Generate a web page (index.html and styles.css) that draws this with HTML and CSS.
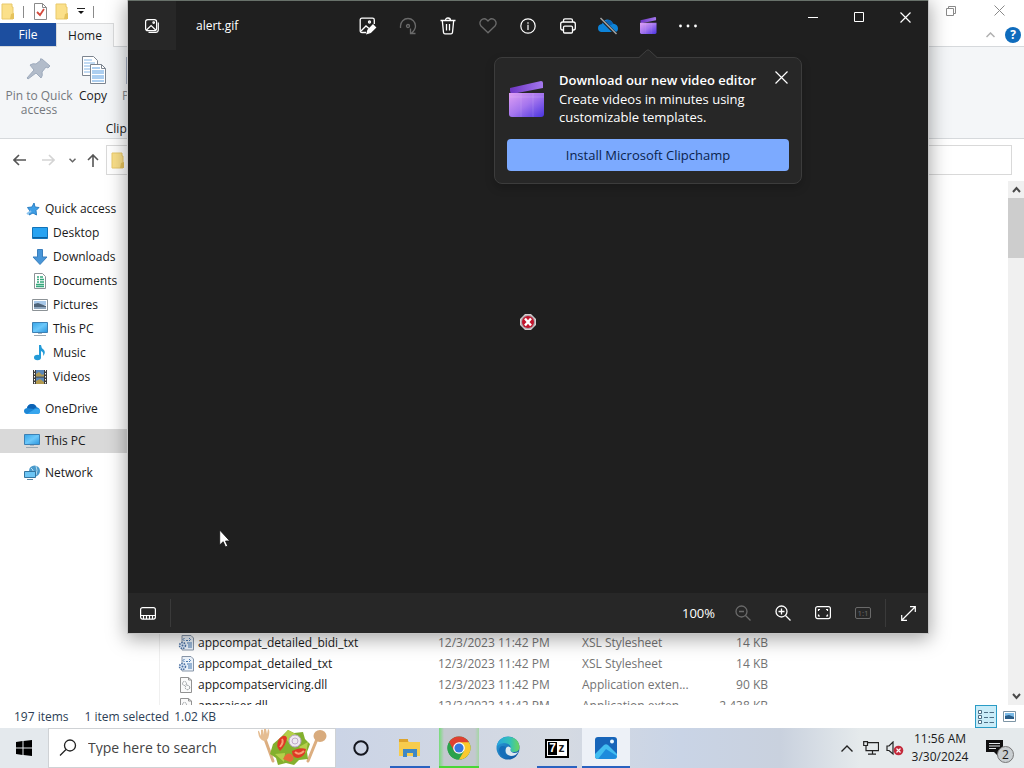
FILE: index.html
```html
<!DOCTYPE html>
<html lang="en">
<head>
<meta charset="utf-8">
<title>alert.gif</title>
<link rel="stylesheet" href="styles.css">
</head>
<body>
<svg class="defs" aria-hidden="true">
  <defs>
    <linearGradient id="clipA" x1="0" y1="0" x2="1" y2="1"><stop offset="0" stop-color="#e0a0f4"/><stop offset=".5" stop-color="#a475ee"/><stop offset="1" stop-color="#4934e0"/></linearGradient>
    <linearGradient id="clipB" x1="0" y1="0" x2="1" y2="0"><stop offset="0" stop-color="#6e35c4"/><stop offset="1" stop-color="#a478ee"/></linearGradient>
    <linearGradient id="scr" x1="0" y1="0" x2="1" y2="1"><stop offset="0" stop-color="#35a5e8"/><stop offset=".5" stop-color="#6cc8fa"/><stop offset="1" stop-color="#2a95dd"/></linearGradient>
    <linearGradient id="edgeA" x1="0" y1="0" x2="1" y2="1"><stop offset="0" stop-color="#2aa3dd"/><stop offset="1" stop-color="#0f4f9c"/></linearGradient>
    <linearGradient id="edgeB" x1="0" y1="0" x2="1" y2="0"><stop offset="0" stop-color="#27a5e0"/><stop offset=".6" stop-color="#35c2b4"/><stop offset="1" stop-color="#6dd65a"/></linearGradient>
    <symbol id="folder" viewBox="0 0 14 17"><path d="M1 1h10v3h1v12H1z" fill="#fbe08a" stroke="#e9c96b"/><path d="M10 11l3-1v6h-4z" fill="#e5c25c"/></symbol>
    <symbol id="pc" viewBox="0 0 16 16"><path d="M.5 1.500h15v10H.5z" fill="url(#scr)" stroke="#3c80b4"/><path d="M6 12h4v1H6z" fill="#a9b7c2"/><path d="M2 14.500h12" stroke="#9aa8b2"/></symbol>
    <symbol id="clip" viewBox="0 0 36 36"><path d="M1 7l31-7q2 0 2 2v5L3 13Q1 12 1 10z" fill="url(#clipB)"/><path d="M0 12h35v21q0 3-3 3H3q-3 0-3-3z" fill="url(#clipA)"/><path d="M1 16h34M12 12v24M24 12v24" stroke="#fff" stroke-opacity=".13"/></symbol>
    <symbol id="xsl" viewBox="0 0 16 16"><path d="M4 .5h9l2.500 2.500v12H4z" fill="#eaf1f9" stroke="#8795a8"/><path d="M6.500 3L5 4.500 6.500 6M11 3l1.500 1.500L11 6M8 5.500h2M9 8h5M10 10h4M10 12h4" fill="none" stroke="#4778b0"/><circle cx="4.500" cy="10.500" r="3" fill="#dce8f6" stroke="#4b70a2" stroke-width="1.500" stroke-dasharray="1.500 1"/><circle cx="4.500" cy="10.500" r="1" fill="#4b70a2"/></symbol>
    <symbol id="dll" viewBox="0 0 16 16"><path d="M2.500.5h8L13.500 3v12.500h-11z" fill="#fafafa" stroke="#929292"/><path d="M10.500.5V3h3" fill="none" stroke="#929292"/><circle cx="6.500" cy="6.500" r="2" fill="none" stroke="#8a8f93" stroke-dasharray="1.500 .7"/><circle cx="9.500" cy="10.500" r="2.200" fill="none" stroke="#8a8f93" stroke-dasharray="1.500 .7"/></symbol>
  </defs>
</svg>

<div class="desktop">
  <section class="explorer" aria-label="File Explorer">
    <header class="ex-title">
      <div class="quick-tools">
        <svg width="14" height="17"><use href="#folder"/></svg>
        <i class="tick"></i>
        <svg width="13" height="17" viewBox="0 0 13 17"><path d="M.5.5h8l4 4v12H.5z" fill="#fff" stroke="#8a8a8a"/><path d="M8.500.5v4h4" fill="none" stroke="#8a8a8a"/><path d="M3 9l3 3 4-6" fill="none" stroke="#d4493c" stroke-width="1.800"/></svg>
        <svg width="14" height="17"><use href="#folder"/></svg>
        <svg width="8" height="7" viewBox="0 0 8 7"><path d="M0 .5h8" stroke="#222"/><path d="M1 3h6L4 6z" fill="#111"/></svg>
        <i class="tick"></i>
      </div>
      <div class="ex-controls">
        <button aria-label="Restore"><svg width="10" height="10" viewBox="0 0 10 10" fill="none" stroke="#8a8a8a"><path d="M.5 2.500h7v7h-7zM2.500 2.500v-2h7v7h-2"/></svg></button>
        <button aria-label="Close"><svg width="11" height="11" viewBox="0 0 11 11" stroke="#8a8a8a"><path d="M.5.5l10 10M10.500.5l-10 10"/></svg></button>
      </div>
    </header>
    <nav class="ex-tabs">
      <button class="tab-file">File</button>
      <button class="tab-home">Home</button>
      <div class="tabs-end">
        <button aria-label="Collapse ribbon"><svg width="9" height="6" viewBox="0 0 9 6" fill="none" stroke="#b0b0b0" stroke-width="1.500"><path d="M.5 5l4-4 4 4"/></svg></button>
        <button class="help" aria-label="Help">?</button>
      </div>
    </nav>
    <div class="ribbon">
      <div class="ribbon-group">
        <div class="ribbon-row">
          <button class="rb rb-pin"><svg width="32" height="32" viewBox="0 0 32 32" fill="#b2bcca"><path d="M19 5l8 7-2 2-2-1-4 5q1 4-1 6l-5-5-8 6-1-1 7-8-4-5q3-2 6-1l5-4-1-1z" stroke="#9eabbd"/></svg><span>Pin to Quick<br>access</span></button>
          <button class="rb rb-copy"><svg width="32" height="32" viewBox="0 0 32 32" fill="#fff" stroke="#7c8590"><path d="M5.500 2.500h11l4 4v15h-15z"/><path d="M7 6h8M7 9h11M7 12h11M7 15h11M7 18h11" stroke="#85b6e6"/><path d="M13.500 10.500h11l4 4v15h-15z"/><path d="M24.500 10.500v4h4" fill="none"/><path d="M15 14h8M15 17h12M15 19h12M15 22h12M15 24h12M15 27h12" stroke="#5b9ee0"/></svg><span>Copy</span></button>
          <button class="rb rb-paste"><svg width="28" height="32" viewBox="0 0 28 32"><path d="M4 3h22v27H4z" fill="#a7b0c2"/></svg><span>Paste</span></button>
        </div>
        <div class="ribbon-name">Clipboard</div>
      </div>
    </div>
    <div class="address-row">
      <button aria-label="Back"><svg width="13" height="12" viewBox="0 0 13 12" fill="none" stroke="#555" stroke-width="1.600"><path d="M13 6H1M6 1L1 6l5 5"/></svg></button>
      <button aria-label="Forward"><svg width="13" height="12" viewBox="0 0 13 12" fill="none" stroke="#d4d4d4" stroke-width="1.600"><path d="M0 6h12M7 1l5 5-5 5"/></svg></button>
      <button class="recent" aria-label="Recent locations"><svg width="7" height="5" viewBox="0 0 7 5" fill="none" stroke="#666" stroke-width="1.500"><path d="M.5 .7l3 3 3-3"/></svg></button>
      <button class="up" aria-label="Up"><svg width="12" height="13" viewBox="0 0 12 13" fill="none" stroke="#555" stroke-width="1.600"><path d="M6 13V1M1 6l5-5 5 5"/></svg></button>
      <label class="address"><svg width="14" height="17"><use href="#folder"/></svg><input type="text" aria-label="Address"></label>
    </div>
    <div class="ex-body">
      <nav class="side">
        <a href="#" class="root"><svg width="16" height="16" viewBox="0 0 16 16"><path d="M10 2l1 4 4 .5-3 3 .5 4.500-3.500-2-4 2 1-4-2.500-3.500 4.500-.5z" fill="#3f9fe6" stroke="#2b7fc4"/><path d="M3 13l4-3" stroke="#8bc4ef" stroke-width="2"/></svg>Quick access</a>
        <a href="#"><svg width="16" height="16" viewBox="0 0 16 16"><path d="M.5 2.500h15v11H.5z" fill="#27a3f2" stroke="#1273b8"/><path d="M1 12.500h14" stroke="#0c5f9e"/></svg>Desktop</a>
        <a href="#"><svg width="16" height="16" viewBox="0 0 16 16"><path d="M5.500.5h5V8H15l-7 7.500L1 8h4.500z" fill="#4896d8" stroke="#3a7fbd"/></svg>Downloads</a>
        <a href="#"><svg width="16" height="16" viewBox="0 0 16 16"><path d="M2.500.5h8l3 3v12h-11z" fill="#fff" stroke="#8c9296"/><path d="M8 4h3M5 4h2M5 6.500h2M8 6.500h4M5 9h2M8 9h4M4 11.500h8M4 13.500h8" stroke="#35a87c" stroke-width="1.300"/></svg>Documents</a>
        <a href="#"><svg width="16" height="16" viewBox="0 0 16 16"><path d="M.5 2.500h15v11H.5z" fill="#fff" stroke="#8c9296"/><path d="M2 4h12v4H2z" fill="#a8c8e8"/><path d="M2 7l4-1 8 3v3H2z" fill="#4f6479"/><path d="M2 10h12v2H2z" fill="#8fa6bd"/></svg>Pictures</a>
        <a href="#"><svg width="16" height="16"><use href="#pc"/></svg>This PC</a>
        <a href="#"><svg width="16" height="16" viewBox="0 0 16 16" fill="#239bd8"><ellipse cx="5.500" cy="12.500" rx="3.500" ry="2.800"/><path d="M7 0h2q0 3 3 5 2 3-1 6 1-4-2-5v7H7z"/></svg>Music</a>
        <a href="#"><svg width="16" height="16" viewBox="0 0 16 16"><path d="M1 1h14v14H1z" fill="#3b3b3b"/><path d="M4 1h8v6.500H4zM4 8.500h8V15H4z" fill="#5c87b8"/><path d="M4 5l3-2 3 3 2-1v2.500H4zM4 12l4-2 4 3v2H4z" fill="#b29a50"/><path d="M2.500 1v14M13.500 1v14" stroke="#fff" stroke-dasharray="1.500 1.500"/></svg>Videos</a>
        <a href="#" class="root gap"><svg width="16" height="16" viewBox="0 0 16 16"><path d="M3 13q-3-.5-3-3t3-3q1-4 5-4 3 0 4.500 3Q16 7 16 10t-3 3z" fill="#1d87d6"/><path d="M3 13l8-5q5-1 5 2.500 0 2.500-3 2.500z" fill="#37a6ee"/><path d="M3 7q1-4 5-4 3 0 4.500 3l-3 2z" fill="#0d62b4"/></svg>OneDrive</a>
        <a href="#" class="root gap current"><svg width="16" height="16"><use href="#pc"/></svg>This PC</a>
        <a href="#" class="root gap"><svg width="16" height="16" viewBox="0 0 16 16"><circle cx="10.500" cy="6" r="5.500" fill="#4a9acb"/><path d="M7 3q3 2 2 4M12 1q2 4 0 9" stroke="#b5ddf2" fill="none"/><path d="M.5 6.500h11v6H.5z" fill="#6cc5f4" stroke="#34759f"/><path d="M3 14.500h6" stroke="#5a87a5"/></svg>Network</a>
      </nav>
      <main class="files">
        <table>
          <colgroup><col class="c-name"><col class="c-date"><col class="c-type"><col class="c-size"></colgroup>
          <tbody>
            <tr><td><span class="name"><svg width="16" height="16"><use href="#xsl"/></svg>appcompat_detailed_bidi_txt</span></td><td>12/3/2023 11:42 PM</td><td>XSL Stylesheet</td><td class="num">14 KB</td></tr>
            <tr><td><span class="name"><svg width="16" height="16"><use href="#xsl"/></svg>appcompat_detailed_txt</span></td><td>12/3/2023 11:42 PM</td><td>XSL Stylesheet</td><td class="num">14 KB</td></tr>
            <tr><td><span class="name"><svg width="16" height="16"><use href="#dll"/></svg>appcompatservicing.dll</span></td><td>12/3/2023 11:42 PM</td><td>Application exten...</td><td class="num">90 KB</td></tr>
            <tr><td><span class="name"><svg width="16" height="16"><use href="#dll"/></svg>appraiser.dll</span></td><td>12/3/2023 11:42 PM</td><td>Application exten...</td><td class="num">2,438 KB</td></tr>
          </tbody>
        </table>
      </main>
      <div class="scroll">
        <button aria-label="Scroll up"><svg width="9" height="7" viewBox="0 0 9 7" fill="none" stroke="#4a4a4a" stroke-width="2"><path d="M1 6l3.500-4L8 6"/></svg></button>
        <div class="thumb"></div>
        <button aria-label="Scroll down"><svg width="9" height="7" viewBox="0 0 9 7" fill="none" stroke="#4a4a4a" stroke-width="2"><path d="M1 1l3.500 4L8 1"/></svg></button>
      </div>
    </div>
    <footer class="status">
      <span>197 items</span><span class="sel">1 item selected</span><span>1.02 KB</span>
      <div class="views">
        <button class="on" aria-label="Details view"><svg width="16" height="14" viewBox="0 0 16 14" fill="none" stroke="#4d6f86"><path d="M.5.500h3v3h-3zM.5 5.500h3v3h-3zM.5 10.500h3v3h-3z" fill="#fff"/><path d="M6 2.500h4M11.500 2.500H16M6 7.500h4M11.500 7.500H16M6 12.500h4M11.500 12.500H16"/></svg></button>
        <button aria-label="Large icons view"><svg width="13" height="11" viewBox="0 0 13 11"><path d="M.5.5h12v10H.5z" fill="#fff" stroke="#7d95a5"/><path d="M2 2h9v6H2z" fill="#7cbbe8"/><path d="M2 5l4-1 5 2v2H2z" fill="#2a5d88"/></svg></button>
      </div>
    </footer>
  </section>

  <section class="photos" aria-label="Photos">
    <header class="ph-head">
      <div class="ph-left">
        <button class="gallery" aria-label="Gallery"><svg width="14" height="14" viewBox="0 0 14 14" fill="none" stroke="#fff" stroke-width="1.200"><rect x=".6" y=".6" width="11" height="11" rx="2.200"/><path d="M1.500 11l4.600-4.500 4.600 4.500M13.300 3.500v7.300q0 2.500-2.500 2.500H3.500"/><circle cx="8.700" cy="3.600" r=".8"/></svg></button>
        <span class="fname">alert.gif</span>
      </div>
      <div class="tools">
        <button aria-label="Edit image"><svg width="18" height="18" viewBox="0 0 18 18" fill="none" stroke="#fff" stroke-width="1.300"><path d="M7 15.500H3q-1.800 0-1.800-1.800V3Q1.200 1.200 3 1.200h10.500q1.800 0 1.800 1.800v4"/><path d="M2 14l5-5 3 2.500"/><circle cx="10.500" cy="5" r="1"/><path d="M8 16.500l1-3.500 5-5 2.500 2.500-5 5z" fill="#fff"/></svg></button>
        <button class="dim" aria-label="Rotate"><svg width="18" height="18" viewBox="0 0 18 18" fill="none" stroke="currentColor" stroke-width="1.300"><path d="M1.500 11V9a7.500 7.500 0 0 1 15 0q0 4-4.500 7.500M11.500 11.500v5h5"/><circle cx="9" cy="9" r="1.500"/></svg></button>
        <button aria-label="Delete"><svg width="16" height="18" viewBox="0 0 16 18" fill="none" stroke="#fff" stroke-width="1.300"><path d="M.5 3.500h15M2.300 3.500l1.200 11.800q.2 1.500 1.500 1.500h6q1.300 0 1.500-1.500l1.200-11.800M5.500 3.500q0-2.500 2.500-2.500t2.500 2.500M6.500 7v6.500M9.500 7v6.500"/></svg></button>
        <button class="dim" aria-label="Favorite"><svg width="18" height="16" viewBox="0 0 18 16" fill="none" stroke="currentColor" stroke-width="1.300"><path d="M9 14.800L2 8Q-.2 5 2 2.300 5-.6 8 2l1 1 1-1q3-2.600 6 .3 2.200 2.700 0 5.700z"/></svg></button>
        <button aria-label="File info"><svg width="16" height="16" viewBox="0 0 16 16" fill="none" stroke="#fff" stroke-width="1.200"><circle cx="8" cy="8" r="7.200"/><path d="M8 6.800V12M8 4.200v1.500"/></svg></button>
        <button aria-label="Print"><svg width="16" height="16" viewBox="0 0 16 16" fill="none" stroke="#fff" stroke-width="1.300"><path d="M3.500 12H2.500Q.7 12 .7 10V6Q.7 4 2.700 4h10.600q2 0 2 2v4q0 2-1.800 2h-1M3.500 4V2.500Q3.500.8 5 .8h6q1.500 0 1.500 1.700V4"/><rect x="3.500" y="8.200" width="9" height="6.800" rx="1.200"/></svg></button>
        <button aria-label="OneDrive"><svg width="22" height="18" viewBox="0 0 22 18"><path d="M4 15q-3-.5-3-4t4-4q1-4 5-4.500 4 0 6 4 5 1 5 5t-4 3.500z" fill="#0d83d8"/><path d="M7 7q2-4.500 5-4 3 .5 4 4l-6 3z" fill="#0a62b2"/><path d="M3 1l16 16" stroke="#1f1f1f" stroke-width="3"/><path d="M3.500 1l16 16" stroke="#a6a6a6" stroke-width="1.400"/></svg></button>
        <div class="clip-anchor">
          <button aria-label="Clipchamp"><svg width="17" height="17"><use href="#clip"/></svg></button>
          <div class="popup" role="dialog" aria-label="Download our new video editor">
            <svg class="notch" width="18" height="9" viewBox="0 0 18 9"><path d="M0 9l7.500-7.500q1.500-1.300 3 0L18 9z" fill="#272727"/><path d="M0 8.500L7.500 1.500q1.500-1.300 3 0L18 8.500" fill="none" stroke="#414141"/></svg>
            <div class="pop-main">
              <svg width="36" height="36"><use href="#clip"/></svg>
              <div class="pop-text"><strong>Download our new video editor</strong><p>Create videos in minutes using<br>customizable templates.</p></div>
              <button class="pop-close" aria-label="Close"><svg width="13" height="13" viewBox="0 0 13 13" stroke="#fff" stroke-width="1.200"><path d="M.5.5l12 12M12.500.5l-12 12"/></svg></button>
            </div>
            <button class="install">Install Microsoft Clipchamp</button>
          </div>
        </div>
        <button aria-label="See more"><svg width="18" height="4" viewBox="0 0 18 4" fill="#fff"><circle cx="1.500" cy="2" r="1.400"/><circle cx="9" cy="2" r="1.400"/><circle cx="16.500" cy="2" r="1.400"/></svg></button>
      </div>
      <div class="ph-controls">
        <button aria-label="Minimize"><svg width="10" height="10" viewBox="0 0 10 10" stroke="#fff"><path d="M0 5.500h10"/></svg></button>
        <button aria-label="Maximize"><svg width="10" height="10" viewBox="0 0 10 10" stroke="#fff" fill="none"><path d="M.5.5h9v9h-9z"/></svg></button>
        <button aria-label="Close"><svg width="11" height="11" viewBox="0 0 11 11" stroke="#fff" stroke-width="1.200"><path d="M.5.5l10 10M10.500.5l-10 10"/></svg></button>
      </div>
    </header>
    <div class="canvas">
      <svg width="16" height="16" viewBox="0 0 16 16"><path d="M5 0h6l5 5v6l-5 5H5l-5-5V5z" fill="#d6cdd0"/><circle cx="8" cy="8" r="7" fill="#a79da2"/><circle cx="8" cy="8" r="6" fill="#c2142c"/><path d="M5 4.500l6 7M11 4.500l-6 7" stroke="#fff" stroke-width="2.400"/></svg>
    </div>
    <footer class="ph-foot">
      <button aria-label="Filmstrip"><svg width="16" height="13" viewBox="0 0 16 13" fill="none" stroke="#fff" stroke-width="1.200"><rect x=".6" y=".6" width="14.800" height="11.500" rx="2"/><path d="M1 8.500h14M3.500 9v3M6.500 9v3M9.500 9v3M12.500 9v3"/></svg></button>
      <i class="bar"></i>
      <span class="zoom">100%</span>
      <button class="dim" aria-label="Zoom out"><svg width="16" height="16" viewBox="0 0 16 16" fill="none" stroke="currentColor" stroke-width="1.300"><circle cx="6.500" cy="6.500" r="5.500"/><path d="M10.500 10.500l5 5M4 6.500h5"/></svg></button>
      <button aria-label="Zoom in"><svg width="16" height="16" viewBox="0 0 16 16" fill="none" stroke="#fff" stroke-width="1.300"><circle cx="6.500" cy="6.500" r="5.500"/><path d="M10.500 10.500l5 5M3.500 6.500h6M6.500 3.500v6"/></svg></button>
      <button aria-label="Zoom to fit"><svg width="16" height="14" viewBox="0 0 16 14" fill="none" stroke="#fff" stroke-width="1.200"><rect x=".6" y=".6" width="14.800" height="12" rx="2"/><path d="M3.500 5V3.500H5M11 3.500h1.500V5M12.500 8.500V10H11M5 10H3.500V8.500"/></svg></button>
      <button class="dim actual" aria-label="Zoom to actual size">1:1</button>
      <i class="bar"></i>
      <button aria-label="Full screen"><svg width="15" height="15" viewBox="0 0 15 15" fill="none" stroke="#fff" stroke-width="1.200"><path d="M1 14L14 1M9 .7h5.300V6M.7 9v5.300H6"/></svg></button>
    </footer>
  </section>

  <svg class="cursor" width="12" height="19" viewBox="0 0 12 19"><path d="M.7 1v15l3.500-3.300 2.300 5.300 2.200-1-2.200-5h4.300z" fill="#fff" stroke="#111" stroke-width=".8"/></svg>

  <footer class="taskbar">
    <button class="start" aria-label="Start"><svg width="16" height="16" viewBox="0 0 16 16" fill="#000"><path d="M0 2l6.500-1v6.500H0zM7.500.9L16 0v7.500H7.500zM0 8.500h6.500V15L0 14zM7.500 8.500H16V16l-8.500-1z"/></svg></button>
    <label class="search">
      <svg width="18" height="18" viewBox="0 0 18 18" fill="none" stroke="#222" stroke-width="1.300"><circle cx="11" cy="6.500" r="5.500"/><path d="M7 10.500L1 16.500"/></svg>
      <input type="text" placeholder="Type here to search" aria-label="Search">
      <svg width="72" height="38" viewBox="0 0 72 38"><g stroke="#dcae80" stroke-width="3" stroke-linecap="round"><path d="M8 10l8 22M60 10l-9 22"/></g><path d="M1 3q0-2 1-1l2 5 0-6q1-1 2 0l1 5 0-6q1-1 2 0l1 5 1-5q2 0 1 6-1 6-5 6-5-1-6-9z" fill="#e5bd92"/><ellipse cx="63" cy="7" rx="6.500" ry="6" fill="#d8ab7d"/><path d="M16 15l7-6 8-8 6 3 9-1 2 7 5 5-3 8 1 7-9 1-5 5-8-2-8 2-2-7-6-4z" fill="#83b02d"/><path d="M26 7l5-6 6 3 4 4-8 7zM42 18l9-5-2 11zM18 25l10-1-1 9z" fill="#b4cf4a"/><path d="M22 10q6-6 8-1-1 7-7 13-5-5-1-12zM35 22q8-4 14-2-1 8-8 9-6 0-6-7z" fill="#df3925"/><path d="M25 10q2 3-2 8M38 23q4 4 9-1" stroke="#f8a076" fill="none" stroke-width="2"/><circle cx="38" cy="12" r="6" fill="#eee9ef" stroke="#b9a4c8"/><circle cx="38" cy="12" r="3" fill="none" stroke="#c0abc9"/><path d="M26 30q5-9 10-3 2 4-3 6z" fill="#e66a38"/></svg>
    </label>
    <div class="apps">
      <button aria-label="Cortana"><svg width="16" height="16" viewBox="0 0 16 16"><circle cx="8" cy="8" r="6.700" fill="none" stroke="#14161e" stroke-width="2"/></svg></button>
      <button class="run" aria-label="File Explorer"><svg width="22" height="20" viewBox="0 0 22 20"><path d="M0 1h8l2 3h11v14H0z" fill="#f7cc4d"/><path d="M0 1h9v3H0z" fill="#dda42c"/><path d="M4 11h14v8h-4v-4H8v4H4z" fill="#3f88c5"/></svg></button>
      <button class="run chrome" aria-label="Chrome"><svg width="24" height="24" viewBox="0 0 24 24"><circle cx="12" cy="12" r="11.500" fill="#2ba24c"/><path d="M2 6.250A11.500 11.500 0 0 1 22 6.250L12 12z" fill="#df4030"/><path d="M2 6.250L8 17l4-5V6.250z" fill="#df4030"/><path d="M22 6.250A11.500 11.500 0 0 1 12 23.500L17 15l-5-8.700z" fill="#fac92d"/><path d="M2 6.250L7 15l5 8.500A11.500 11.500 0 0 1 2 6.250z" fill="#2ba24c"/><circle cx="12" cy="12" r="5.800" fill="#fff"/><circle cx="12" cy="12" r="4.600" fill="#3777df"/></svg></button>
      <button aria-label="Edge"><svg width="24" height="24" viewBox="0 0 24 24"><circle cx="12" cy="12" r="11.500" fill="url(#edgeA)"/><path d="M1 10C3-3 23-2 23.500 11q0 5-5.500 5-5 0-3-4-1-5-7-5-4 0-7 3z" fill="url(#edgeB)"/><path d="M15 12q-2 4 3 5 3 0 4.500-1.500Q20 20 15 20q-7-1-5-8 2-3 5 0z" fill="#dce8f0"/><path d="M10 11q-4 9 5 11-11 1-12-8 1-6 7-3z" fill="#156eb9"/></svg></button>
      <button class="run" aria-label="7-Zip"><span class="zip"><b>7</b><b>z</b></span></button>
      <button class="run active" aria-label="Photos"><svg width="22" height="22" viewBox="0 0 22 22"><rect width="22" height="22" rx="3" fill="#1765b9"/><path d="M0 17L9 8q2-1.500 4 0l9 9v2q0 3-3 3H3q-3 0-3-3z" fill="#42bdf0"/><path d="M11 12l11 7q-1 3-4 3H3z" fill="#1e8bdc"/><circle cx="17" cy="4.500" r="2" fill="#e9f7ff"/></svg></button>
    </div>
    <div class="tray">
      <button aria-label="Show hidden icons"><svg width="12" height="7" viewBox="0 0 12 7" fill="none" stroke="#222" stroke-width="1.400"><path d="M.5 6.500L6 1l5.500 5.500"/></svg></button>
      <button aria-label="Network"><svg width="16" height="14" viewBox="0 0 16 14" fill="none" stroke="#222" stroke-width="1.200"><path d="M4.500 1.600h11v8H3V5M9.500 9.600v3.500M5 13.100h8"/><path d="M.7.700h3.800v3.800H.7z"/></svg></button>
      <button aria-label="Volume muted"><svg width="18" height="15" viewBox="0 0 18 15"><path d="M1 5h2l4-4v12L3 9.500H1z" fill="none" stroke="#222" stroke-width="1.200"/><circle cx="12.500" cy="9.500" r="4.800" fill="#c42b3c"/><path d="M10.500 7.500l4 4M14.500 7.500l-4 4" stroke="#fff" stroke-width="1.200"/></svg></button>
      <button class="clock">11:56 AM<br>3/30/2024</button>
      <button class="notif" aria-label="Notifications"><svg width="17" height="16" viewBox="0 0 17 16"><path d="M0 0h17v12h-5v4l-4-4H0z" fill="#101010"/><path d="M3 3.500h11M3 6h11M3 8.500h7" stroke="#e4e8ea"/></svg><span class="badge">2</span></button>
    </div>
  </footer>
</div>
</body>
</html>
```
FILE: styles.css
```css
* { box-sizing: border-box; }
body { margin: 0; font: 12px/16px "Open Sans", "Noto Sans", sans-serif; color: #1a1a1a; }
button { border: 0; padding: 0; margin: 0; background: none; font: inherit; color: inherit; display: flex; align-items: center; justify-content: center; }
input { border: 0; outline: 0; padding: 0; background: none; font: inherit; color: inherit; min-width: 0; flex: 1; }
a { color: inherit; text-decoration: none; }
svg { display: block; flex: none; }
.defs { position: absolute; width: 0; height: 0; }
.desktop { position: relative; height: 100vh; display: flex; flex-direction: column; overflow: hidden; }

/* File Explorer */
.explorer { flex: 1; min-height: 0; display: flex; flex-direction: column; background: #fff; }
.ex-title { display: flex; justify-content: space-between; height: 23px; }
.quick-tools { display: flex; align-items: center; gap: 8px; padding-left: 1px; }
.quick-tools .tick { width: 1px; height: 12px; background: #8a8a8a; }
.quick-tools .tick + svg { margin-left: 2px; }
.ex-controls { display: flex; }
.ex-controls button { width: 46px; height: 21px; }
.ex-controls button:last-child { width: 50px; }
.ex-tabs { display: flex; height: 24px; border-bottom: 1px solid #d6d9dc; }
.tab-file { width: 56px; background: #1c4e9f; color: #fff; }
.tab-home { width: 58px; background: #f5f6f7; border: 1px solid #dadbdc; border-bottom: 0; margin-bottom: -1px; }
.tabs-end { margin-left: auto; display: flex; align-items: center; gap: 10px; padding-right: 3px; }
.help { width: 16px; height: 16px; border-radius: 50%; background: #0f6cbd; color: #fff; font-weight: 700; }
.ribbon { height: 92px; display: flex; background: #f4f6f8; border-bottom: 1px solid #d6d9dc; }
.ribbon-group { display: flex; flex-direction: column; width: 266px; padding-top: 7px; }
.ribbon-row { display: flex; flex: 1; align-items: flex-start; }
.rb { flex-direction: column; gap: 3px; line-height: 14px; }
.rb-pin { width: 78px; color: #75797e; }
.rb-copy { width: 30px; }
.rb-paste { margin-left: 14px; color: #85898e; align-items: flex-start; }
.ribbon-name { text-align: center; padding-bottom: 1px; }
.address-row { display: flex; align-items: center; height: 42px; padding: 0 12px; }
.address-row button { width: 14px; height: 24px; }
.address-row button + button { margin-left: 15px; }
.address-row button.recent { width: 10px; margin-left: 12px; }
.address-row button.up { margin-left: 9px; }
.address { flex: 1; height: 30px; display: flex; align-items: center; gap: 8px; margin-left: 6px; padding-left: 4px; border: 1px solid #d9d9d9; }
.ex-body { flex: 1; min-height: 0; display: flex; }
.side { width: 160px; padding-top: 16px; border-right: 1px solid #f0f0f0; }
.side a { display: flex; align-items: center; gap: 5px; height: 24px; padding-left: 32px; }
.side a.root { padding-left: 24px; }
.side a.gap { margin-top: 8px; }
.side a.current { background: #d9d9d9; }
.files { flex: 1; min-width: 0; overflow: hidden; display: flex; flex-direction: column; justify-content: flex-end; align-items: flex-start; }
.files table { border-collapse: collapse; table-layout: fixed; width: 590px; margin: 0 0 -11px 18px; color: #737373; }
.files td { height: 21px; padding: 0; white-space: nowrap; }
.c-name { width: 260px; }
.c-date { width: 144px; }
.c-type { width: 126px; }
.name { display: flex; align-items: center; gap: 4px; color: #1a1a1a; }
.files td.num { text-align: right; }
.scroll { width: 16px; background: #f0f0f0; display: flex; flex-direction: column; }
.scroll button { height: 17px; }
.scroll .thumb { height: 60px; background: #cdcdcd; margin-bottom: auto; }
.status { display: flex; align-items: center; height: 23px; padding-left: 14px; color: #2c3e55; }
.status .sel { margin: 0 5px 0 16px; }
.views { margin-left: auto; display: flex; padding-right: 3px; }
.views button { width: 24px; height: 23px; }
.views .on { width: 22px; background: #c9ecf8; border: 1px solid #2a9cc6; }

/* Photos */
.photos { position: absolute; inset: 0 96px 135px 128px; display: flex; flex-direction: column; background: #1f1f1f; color: #fff; border-top: 1px solid #68716a; box-shadow: 0 0 0 1px #c4c4c4, 0 4px 18px 2px rgba(0, 0, 0, .35); }
.ph-head { display: grid; grid-template-columns: 1fr auto 1fr; height: 49px; }
.ph-left { display: flex; align-items: center; gap: 20px; }
.gallery { width: 48px; height: 49px; background: #272727; }
.tools { display: flex; align-items: center; }
.tools button { width: 40px; height: 40px; }
.dim { color: #6a6a6a; }
.ph-controls { display: flex; justify-content: flex-end; }
.ph-controls button { width: 46px; height: 32px; }
.clip-anchor { position: relative; }
.popup { position: absolute; top: 51px; left: 50%; transform: translateX(-50%); width: 308px; padding: 12px; background: #272727; border: 1px solid #3c3c3c; border-radius: 8px; box-shadow: 0 4px 10px rgba(0, 0, 0, .2); }
.notch { position: absolute; top: -9px; left: 144px; }
.pop-main { display: flex; align-items: flex-start; gap: 14px; padding-left: 2px; height: 69px; }
.pop-main > svg { margin-top: 11px; }
.pop-text { flex: 1; font-size: 13px; line-height: 18px; white-space: nowrap; }
.pop-text strong { display: block; font-weight: 600; line-height: 20px; }
.pop-text p { margin: 0; }
.popup .pop-close { width: 16px; height: 16px; }
.popup .install { width: 100%; height: 32px; border-radius: 4px; background: #7caaff; color: #0a1f4d; font-size: 13px; }
.canvas { flex: 1; display: flex; align-items: center; justify-content: center; }
.ph-foot { display: flex; align-items: center; height: 40px; background: #272727; }
.ph-foot button { width: 40px; height: 40px; }
.ph-foot .bar { width: 1px; height: 28px; background: #3a3a3a; margin: 0 2px; }
.zoom { margin-left: auto; margin-right: 8px; font-size: 13px; }
.ph-foot .actual { width: 16px; height: 12px; margin: 0 12px; border: 1px solid #6a6a6a; border-radius: 2px; font-size: 8px; line-height: 8px; }
.cursor { position: absolute; left: 219px; top: 529px; }

/* Taskbar */
.taskbar { display: flex; height: 40px; background: linear-gradient(90deg, #e4e9ed 0, #e4e9ed 48px, #cbd4e6 336px, #d5dae2 560px, #c9d4e6 680px, #c9d1de 780px, #e5eaec 860px); }
.start { width: 48px; }
.search { width: 288px; display: flex; align-items: center; background: #fff; border: 1px solid #cfd2d5; padding: 0 6px 0 10px; color: #444; font-size: 14px; }
.search input { margin-left: 11px; }
.search input::placeholder { color: #444; opacity: 1; }
.apps { display: flex; gap: 1px; padding-left: 1px; }
.apps button { width: 48px; position: relative; }
.apps .run::after { content: ""; position: absolute; left: 4px; right: 4px; bottom: 0; height: 2px; background: #2a62c0; }
.apps .chrome { background: linear-gradient(90deg, transparent 4px, #76dd78 4px, #c3c8cf 9px, #c3c8cf 40px, #a4d6a4 44px, transparent 44px); }
.apps .chrome::after { background: #49d637; }
.apps .active { background: #edf1f7; }
.apps .active::after { left: 0; right: 0; }
.zip { display: flex; align-items: center; justify-content: center; width: 24px; height: 19px; border: 2px solid #000; background: #fff; }
.zip b { width: 9px; height: 13px; font: 700 12px/13px "Liberation Sans", sans-serif; text-align: center; }
.zip b:first-child { background: #000; color: #fff; }
.tray { margin-left: auto; display: flex; align-items: stretch; padding-right: 9px; }
.tray button { width: 24px; }
.tray .clock { width: 66px; line-height: 18px; text-align: center; }
.tray .notif { position: relative; width: 42px; }
.badge { position: absolute; right: 1px; bottom: 5px; width: 17px; height: 17px; border: 1px solid #777; border-radius: 50%; background: #c9ced1; line-height: 15px; text-align: center; }
```
